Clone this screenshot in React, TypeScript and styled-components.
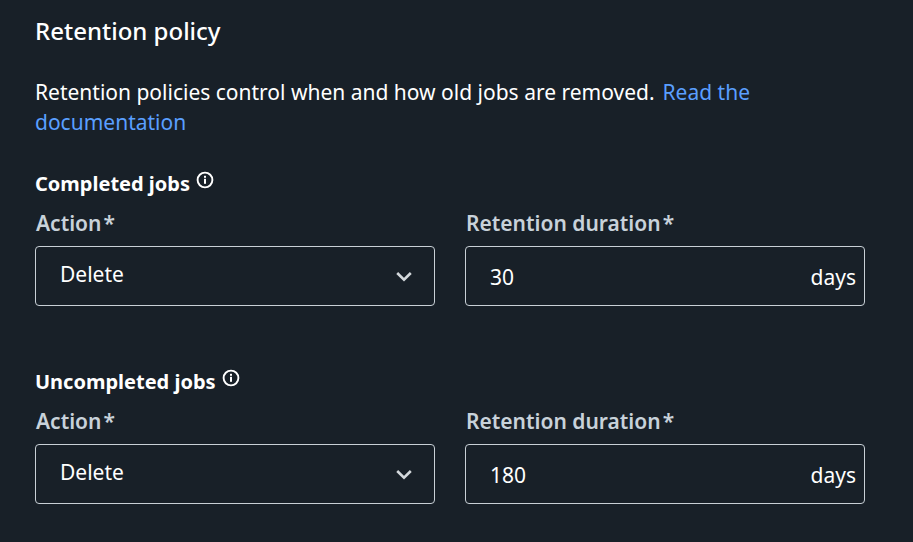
import styled, { createGlobalStyle } from 'styled-components';

const GlobalStyle = createGlobalStyle`
  html, body {
    margin: 0;
    padding: 0;
    background: #182028;
    overflow: hidden;
  }
`;

interface JobPolicy {
  title: string;
  duration: number;
}

const policies: JobPolicy[] = [
  { title: 'Completed jobs', duration: 30 },
  { title: 'Uncompleted jobs', duration: 180 },
];

function InfoIcon() {
  return (
    <svg width="18" height="18" viewBox="0 0 18 18" fill="none">
      <circle cx="9" cy="9" r="7.4" stroke="#fff" strokeWidth="1.9" />
      <rect x="8" y="7.8" width="2" height="5" fill="#fff" />
      <rect x="8" y="4.8" width="2" height="2" fill="#fff" />
    </svg>
  );
}

function ChevronIcon() {
  return (
    <svg width="16" height="11" viewBox="0 0 16 11" fill="none">
      <path d="M1.2 2 L8 8.6 L14.8 2" stroke="#d3d8dc" strokeWidth="2.6" />
    </svg>
  );
}

export default function App() {
  return (
    <Page>
      <GlobalStyle />
      <Heading>Retention policy</Heading>
      <Intro>
        Retention policies control when and how old jobs are removed.
        <DocLink href="#">Read the documentation</DocLink>
      </Intro>
      {policies.map((policy) => (
        <Section key={policy.title}>
          <SectionTitle>
            {policy.title}
            <InfoIcon />
          </SectionTitle>
          <Fields>
            <Field>
              <FieldLabel>
                Action<Required>*</Required>
              </FieldLabel>
              <SelectControl>
                <SelectValue>Delete</SelectValue>
                <ChevronIcon />
              </SelectControl>
            </Field>
            <Field>
              <FieldLabel>
                Retention duration<Required>*</Required>
              </FieldLabel>
              <DurationControl>
                <ControlValue>{policy.duration}</ControlValue>
                <ControlValue>days</ControlValue>
              </DurationControl>
            </Field>
          </Fields>
        </Section>
      ))}
    </Page>
  );
}

const Page = styled.div`
  box-sizing: border-box;
  width: 913px;
  height: 542px;
  padding: 16px 48px 0 35px;
  background: #182028;
  color: #fff;
  font-family: 'Noto Sans', sans-serif;
`;

const Heading = styled.h2`
  margin: 0;
  font-size: 24px;
  line-height: 30px;
  font-weight: 500;
`;

const Intro = styled.p`
  margin: 31px 0 0;
  width: 780px;
  font-size: 21px;
  line-height: 30px;
`;

const DocLink = styled.a`
  margin-left: 8px;
  color: #5a9fff;
  text-decoration: none;
`;

const Section = styled.section`
  margin-top: 34px;
  & + & {
    margin-top: 63px;
  }
`;

const SectionTitle = styled.div`
  display: flex;
  align-items: flex-start;
  gap: 6px;
  font-size: 20px;
  line-height: 26px;
  font-weight: 700;
`;

const Fields = styled.div`
  display: grid;
  grid-template-columns: 400px 400px;
  column-gap: 30px;
  margin-top: 13px;
`;

const Field = styled.div`
  display: flex;
  flex-direction: column;
`;

const FieldLabel = styled.label`
  padding-left: 1px;
  font-size: 21px;
  line-height: 26px;
  font-weight: 600;
  color: #c8d2da;
`;

const Required = styled.span`
  margin-left: 2px;
`;

const SelectControl = styled.div`
  box-sizing: border-box;
  display: flex;
  align-items: center;
  justify-content: space-between;
  height: 60px;
  margin-top: 10px;
  padding: 0 22px 0 24px;
  border: 1px solid #c8d0d6;
  border-radius: 4px;
`;

const DurationControl = styled(SelectControl)`
  padding-right: 8px;
  padding-top: 1px;
`;

const ControlValue = styled.span`
  font-size: 21px;
`;

const SelectValue = styled(ControlValue)`
  margin-top: -4px;
`;
